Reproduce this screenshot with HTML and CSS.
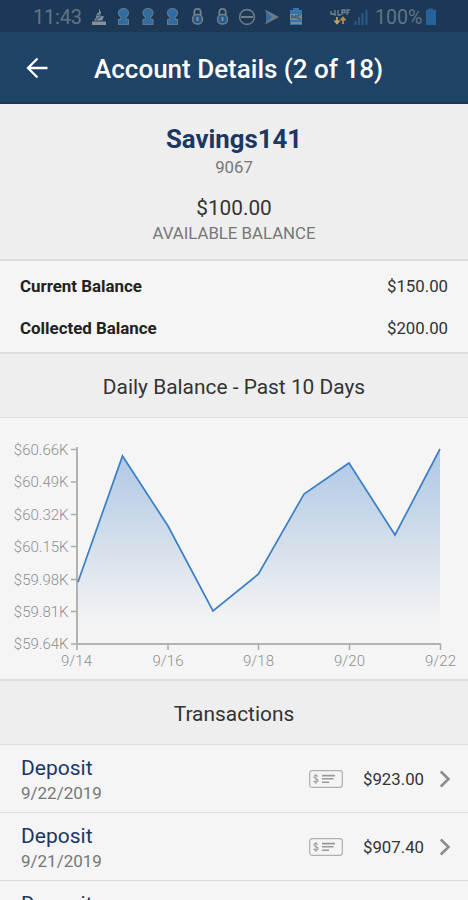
FILE: index.html
```html
<!DOCTYPE html>
<html lang="en">
<head>
<meta charset="utf-8">
<title>Account Details</title>
<link rel="stylesheet" href="styles.css">
</head>
<body>
<div class="status">
  <span class="clock">11:43</span>
  <svg class="status-icons" width="216" height="32" viewBox="90 0 216 32" aria-hidden="true">
    <defs>
      <g id="keyhole"><path d="M-5 24.500v-5h2l.5-2.500C-7 14-5 8.500 0 8.500s7 5.500 2.500 8.500l.5 2.500h2v5z" fill="#2f6ba5" stroke="#63798b" stroke-width="1.100"/></g>
      <g id="lock"><path d="M-3.200 15v-3a3.200 3.200 0 0 1 6.400 0v3" fill="none" stroke="#72808a" stroke-width="1.800"/><rect x="-4.800" y="14.500" width="9.600" height="9.500" rx="4" fill="#28598b" stroke="#72808a" stroke-width="1.500"/><path d="M0 17v4" stroke="#82909b" stroke-width="2"/></g>
    </defs>
    <path d="M92 21.500h14V25H92zM94 20.500l2-3 1-4 2-1V8.500l2 4-1 3 4 1-2 4z" fill="#87909a"/>
    <path d="M96 19.500l5-3M97 15.500l4-1" stroke="#28598b" stroke-width="1.200"/>
    <use href="#keyhole" x="123.500"/><use href="#keyhole" x="148"/><use href="#keyhole" x="172.500"/>
    <use href="#lock" x="197.500"/><use href="#lock" x="222.500"/>
    <circle cx="247" cy="17" r="7.400" fill="none" stroke="#6d7a85" stroke-width="1.600"/><path d="M241 17h12" stroke="#7d8891" stroke-width="1.800"/>
    <path d="M265 9.500l14 7.500-14 7.500 3-7.500z" fill="#6d7a85"/><path d="M266 11l6 6-6 6z" fill="#376c9b"/>
    <path d="M290 10h3V8h6v2h3v15h-12z" fill="#3475ae"/><path d="M290 14h12v6h-12zM291 22h11v2h-11z" fill="#7e8990"/><path d="M292 19v-4l2 3 2-3v4M301 15h-3v4h3" fill="none" stroke="#24517c"/>
  </svg>
  <svg class="status-icons network" width="42" height="32" viewBox="328 0 42 32" aria-hidden="true">
    <path d="M331 11v3h4M335 10v6M338 10v5h3M342 15v-5h3v2.500h-3M347 15v-5h3M347 12.500h2" fill="none" stroke="#718391" stroke-width="1.300"/>
    <path d="M337 17v6M334.500 20.500l2.500 3 2.500-3" fill="none" stroke="#c2a85d" stroke-width="1.700"/><path d="M343 24v-6M340.500 20.500l2.500-3 2.500 3" fill="none" stroke="#c08a58" stroke-width="1.700"/>
    <path d="M355.500 25v-4M359 25v-8M362.500 25v-12M366.500 25v-15" stroke="#2b5782" stroke-width="2.200"/>
  </svg>
  <span class="percent">100%</span>
  <svg class="battery" width="12" height="32" viewBox="0 0 12 32" aria-hidden="true"><path d="M1 10h2V8.500h5V10h3v15H1z" fill="#27629a"/></svg>
</div>
<header class="appbar">
  <svg class="back" width="24" height="24" viewBox="0 0 24 24" aria-label="Back"><path d="M22.500 13H3.500M12.500 3.500L3 13l9.500 9.500" fill="none" stroke="#fff" stroke-width="2.300"/></svg>
  <h1>Account Details (2 of 18)</h1>
</header>
<section class="summary">
  <h2>Savings141</h2>
  <div class="number">9067</div>
  <div class="amount">$100.00</div>
  <div class="caption">AVAILABLE BALANCE</div>
</section>
<section class="balances">
  <div class="balance"><b>Current Balance</b><span>$150.00</span></div>
  <div class="balance"><b>Collected Balance</b><span>$200.00</span></div>
</section>
<h3 class="heading daily">Daily Balance - Past 10 Days</h3>
<section class="chart">
  <svg width="468" height="261" viewBox="0 418 468 261">
    <defs><linearGradient id="fill" gradientUnits="userSpaceOnUse" x1="0" y1="449" x2="0" y2="643"><stop offset="0" stop-color="#afc9e6"/><stop offset=".2" stop-color="#bdd1e7"/><stop offset=".55" stop-color="#d9e2ec"/><stop offset=".88" stop-color="#f2f3f4"/><stop offset="1" stop-color="#f5f5f5"/></linearGradient></defs>
    <path d="M78 582L122.500 456 168 526 213 611 258.500 574 304 494 349 463 395 535 440 449V643H78z" fill="url(#fill)"/>
    <path d="M71 449.500h6M71 482h6M71 514.500h6M71 546.500h6M71 579.500h6M71 611.500h6M71 644h6M77 644v6M168 644v6M258.500 644v6M349.500 644v6M440.500 644v6" stroke="#aaa" stroke-width="1.500"/>
    <path d="M77 447V644H441" fill="none" stroke="#b2b2b2" stroke-width="2"/>
    <path d="M78 582L122.500 456 168 526 213 611 258.500 574 304 494 349 463 395 535 440 449" fill="none" stroke="#3b7fc4" stroke-width="1.700"/>
    <g class="axis" text-anchor="end">
      <text x="68.500" y="455">$60.66K</text><text x="68.500" y="487">$60.49K</text><text x="68.500" y="519.500">$60.32K</text><text x="68.500" y="552">$60.15K</text><text x="68.500" y="584.500">$59.98K</text><text x="68.500" y="617">$59.81K</text><text x="68.500" y="649">$59.64K</text>
    </g>
    <g class="axis" text-anchor="middle">
      <text x="76.500" y="666">9/14</text><text x="168" y="666">9/16</text><text x="258.500" y="666">9/18</text><text x="349.500" y="666">9/20</text><text x="440.500" y="666">9/22</text>
    </g>
  </svg>
</section>
<h3 class="heading transactions">Transactions</h3>
<svg class="symbols" width="0" height="0" aria-hidden="true">
  <symbol id="check" viewBox="0 0 34 18"><rect x=".7" y=".7" width="32.600" height="16.600" rx="2.500" fill="none" stroke="#b0b0b0" stroke-width="1.200"/><path d="M9 6.500C7.500 4.500 5 5 5 6.900S9.200 8.500 9.200 10.500 6 12.500 4.500 11M7 4v10" fill="none" stroke="#a0a0a0" stroke-width="1.100"/><path d="M13 5.600h13M13 8.800h11.500M13 12.200h7" stroke="#999" stroke-width="1.600"/></symbol>
  <symbol id="chevron" viewBox="0 0 12 18"><path d="M1.800 1.500L9.500 9l-7.700 7.500" fill="none" stroke="#8d8d8d" stroke-width="2.600"/></symbol>
</svg>
<main>
  <div class="transaction"><div class="info"><div class="name">Deposit</div><div class="date">9/22/2019</div></div><svg class="check"><use href="#check"/></svg><span class="value">$923.00</span><svg class="chevron"><use href="#chevron"/></svg></div>
  <div class="transaction"><div class="info"><div class="name">Deposit</div><div class="date">9/21/2019</div></div><svg class="check"><use href="#check"/></svg><span class="value">$907.40</span><svg class="chevron"><use href="#chevron"/></svg></div>
  <div class="transaction partial"><div class="info"><div class="name">Deposit</div></div></div>
</main>
</body>
</html>
```
FILE: styles.css
```css
* { box-sizing: border-box; }
html { height: 900px; overflow: hidden; }
body { margin: 0; height: 900px; overflow: hidden; background: #f5f5f5; color: #333; font-family: Roboto, sans-serif; }
h1, h2, h3 { margin: 0; }
svg { display: block; flex: none; }
.status { height: 32px; display: flex; background: #1b3856; color: #637584; font-size: 20px; line-height: 35px; }
.clock { width: 90px; padding-left: 33px; letter-spacing: -.2px; white-space: nowrap; }
.network { margin-left: 22px; }
.percent { width: 56px; padding-left: 5px; font-size: 19.500px; white-space: nowrap; }
.battery { margin-left: -1px; }
.appbar { height: 72px; display: flex; align-items: center; padding-left: 25px; background: #1f4267; border-bottom: 2px solid #173657; color: #fff; }
.appbar h1 { margin-left: 45px; padding-top: 4px; font-size: 26px; font-weight: 500; line-height: 32px; white-space: nowrap; }
.summary { height: 157px; padding-top: 19px; background: #eee; border-bottom: 2px solid #dedede; text-align: center; }
.summary h2 { color: #1b3764; font-size: 25.800px; line-height: 32px; font-weight: 700; }
.number { margin-top: 1px; color: #777; font-size: 16.800px; line-height: 22px; }
.amount { margin-top: 17px; color: #333; font-size: 20.800px; line-height: 26px; }
.caption { margin-top: 1px; color: #777; font-size: 16.800px; line-height: 22px; }
.balances { height: 91px; padding: 4px 20px 0; }
.balance { height: 42px; display: flex; justify-content: space-between; align-items: center; font-size: 16.800px; }
.balance b { color: #222; font-size: 16.900px; font-weight: 700; }
.heading { height: 66px; background: #eee; border: solid #dedede; border-width: 2px 0 1px; color: #333; text-align: center; font-size: 20.900px; font-weight: 400; line-height: 66px; }
.chart { height: 261px; }
.axis { fill: #8f8f8f; font-family: Roboto, sans-serif; font-size: 15px; font-weight: 300; }
.symbols { position: absolute; }
.transaction { height: 68px; display: flex; align-items: center; padding: 0 17px 0 21px; border-bottom: 1px solid #dadada; }
.partial { height: 19px; overflow: hidden; border: 0; }
.info { flex: 1; align-self: flex-start; padding-top: 10px; }
.name { color: #1b3764; font-size: 21px; line-height: 27px; }
.date { color: #777; font-size: 17px; line-height: 22px; }
.check { width: 34px; height: 18px; }
.value { width: 81px; text-align: right; font-size: 16.800px; color: #333; }
.chevron { width: 12px; height: 18px; margin-left: 15px; }
```
